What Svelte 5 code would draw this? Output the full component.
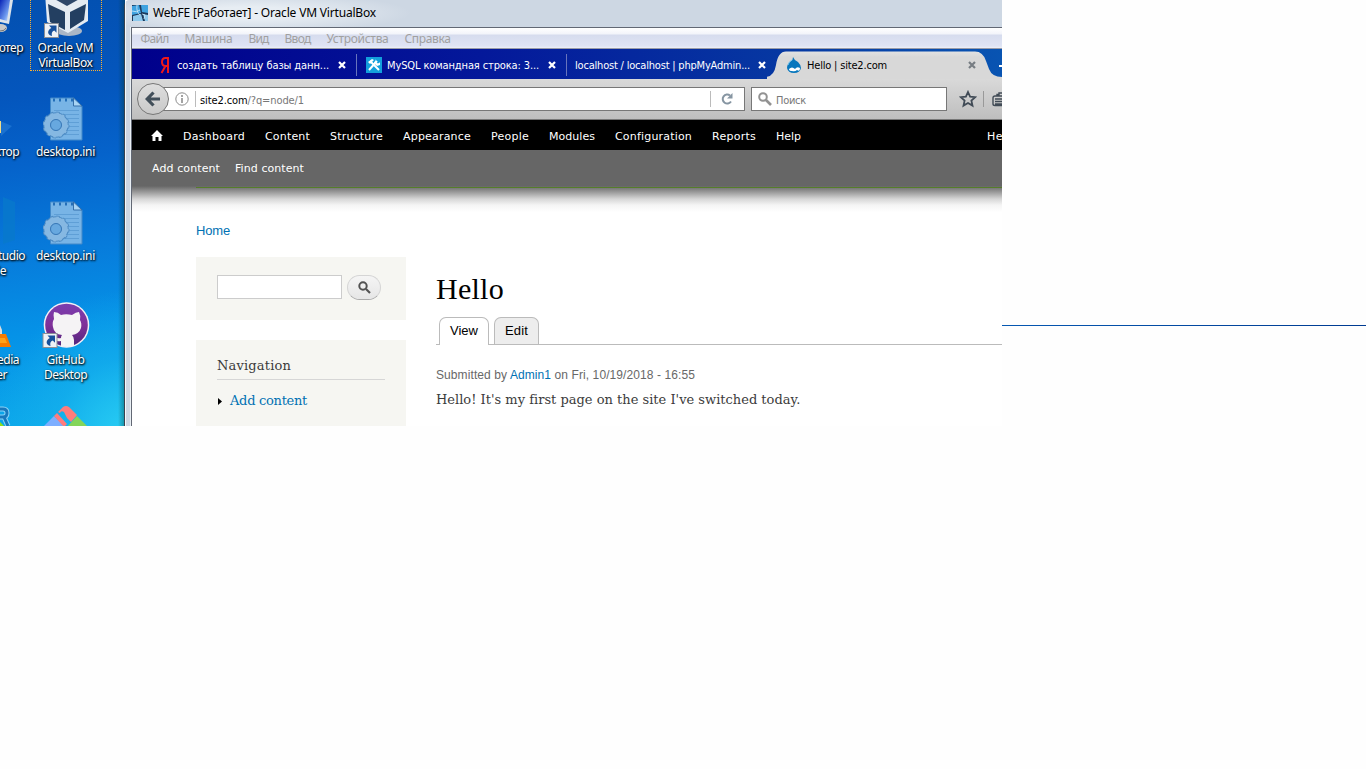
<script>
  // Spreads a label's letters so that it takes the given width.
  function fit(node, width) {
    const natural = node.getBoundingClientRect().width;
    node.style.letterSpacing = (width - natural) / node.textContent.length + 'px';
  }

  const menus = [
    ['Файл', 28], ['Машина', 48], ['Вид', 20], ['Ввод', 26], ['Устройства', 62], ['Справка', 46]
  ];
  const adminLinks = [
    ['Dashboard', 62], ['Content', 45], ['Structure', 53], ['Appearance', 68], ['People', 38],
    ['Modules', 46], ['Configuration', 77], ['Reports', 44], ['Help', 25]
  ];
</script>

{#snippet cross(color)}
  <svg class="cross" width="8" height="8" viewBox="0 0 8 8"><path d="M1 1l6 6M7 1L1 7" stroke={color} stroke-width="2.2" /></svg>
{/snippet}

{#snippet arrow()}
  <rect x="0.5" y="0.5" width="14" height="14" fill="#eef1f5" stroke="#8b8f96" />
  <path d="M5 2.500h7.500v7.300L10.300 7.500C8 8.300 7.300 10 8 13C3.500 12 2.600 7.500 7.300 4.900z" fill="#17509b" />
{/snippet}

{#snippet iniFile()}
  <svg class="ini" width="42" height="44" viewBox="0 0 42 44">
    <path d="M7.500 1h23l8.500 8v34H7.500z" fill="#78b4e6" stroke="#4289c9" />
    <path d="M30.500 1v8H39z" fill="#a8d4f4" stroke="#356fa9" />
    <path d="M11 13.500h25M11 17.500h25M11 21.500h25M11 25.500h25M11 29.500h25M11 33.500h25M11 37.500h25" stroke="#5f9fd6" />
    <path d="M10 3h20" stroke="#246fb8" stroke-width="3" stroke-dasharray="2 4" />
    <circle cx="13" cy="28" r="9" fill="none" stroke="#4d8bc4" stroke-width="7.500" />
    <circle cx="13" cy="28" r="12" fill="none" stroke="#4d8bc4" stroke-width="3" stroke-dasharray="3.200 3.080" />
    <circle cx="13" cy="28" r="8.700" fill="none" stroke="#86b8e2" stroke-width="6" />
    <circle cx="13" cy="28" r="11.300" fill="none" stroke="#86b8e2" stroke-width="2.500" stroke-dasharray="2.500 3.420" />
    <circle cx="13" cy="28" r="5.500" fill="#67a8df" stroke="#3979b8" />
  </svg>
{/snippet}

<div class="screen">
  <div class="desktop">
    <svg class="piece" style:left="0px" style:top="0px" width="14" height="34" viewBox="0 0 14 34">
      <defs><linearGradient id="mon" x2="1" y2="1"><stop stop-color="#0924b7" /><stop offset=".65" stop-color="#6d99ef" /><stop offset="1" stop-color="#e1efff" /></linearGradient></defs>
      <path d="M0 0h13L9 24L0 22z" fill="#dce3ea" /><path d="M0 0h10L7 21L0 19z" fill="url(#mon)" />
      <ellipse cx="1" cy="28" rx="6" ry="4" fill="#c8c9c9" /><path d="M0 31q5 0 6-3" stroke="#777" fill="none" />
    </svg>
    <svg class="piece" style:left="0px" style:top="118px" width="14" height="20" viewBox="0 0 14 20"><path d="M0 3l12 5L1 18z" fill="#3c91e1" opacity=".4" /><path d="M0 3h1v12H0z" fill="#efdc88" /></svg>
    <svg class="piece" style:left="0px" style:top="196px" width="16" height="50" viewBox="0 0 16 50"><path d="M3 1l12 5v38L3 48z" fill="#087acb" opacity=".75" /></svg>
    <svg class="piece" style:left="0px" style:top="324px" width="12" height="25" viewBox="0 0 12 25"><path d="M0 1l2 5v5H0z" fill="#ddd" /><path d="M0 10h6l5 13H0z" fill="#f77b00" /><path d="M0 14h5l2 5H0z" fill="#ffa21a" /></svg>
    <svg class="piece" style:left="0px" style:top="405px" width="12" height="21" viewBox="0 0 12 21"><path d="M0 4h3q4 0 4 4t-4 4H0M4 12l4 9" fill="none" stroke="#8bd3f7" stroke-width="5" /><path d="M0 4h3q4 0 4 4t-4 4H0M4 12l4 9" fill="none" stroke="#1878bd" stroke-width="3" /><path d="M0 17l4 4H0z" fill="#91df1b" /></svg>

    <div class="cut" style:top="40px" style:left="-34px" style:width="57px"><span>Компьютер</span></div>
    <div class="cut" style:top="144px" style:left="-34px" style:width="53px"><span>Редактор</span></div>
    <div class="cut" style:top="248px" style:left="-34px" style:width="59px"><span>Visual Studio</span></div>
    <div class="cut" style:top="263px" style:left="-34px" style:width="40px"><span>Code</span></div>
    <div class="cut" style:top="352px" style:left="-34px" style:width="53px"><span>VLC media</span></div>
    <div class="cut" style:top="367px" style:left="-34px" style:width="41px"><span>player</span></div>

    <div class="icon selected" style:top="-8px">
      <svg width="50" height="46" viewBox="0 0 50 46">
        <ellipse cx="28" cy="38" rx="13" ry="5" fill="#aab6c6" />
        <path d="M4 0L26 6L47 0v28L27 40L6 29z" fill="#e4ebf2" />
        <path d="M7 11l17 8v18L9 29zM29 19l16-8l-2 16l-14 9z" fill="#233f61" />
        <path d="M10 4l16 9L42 4z" fill="#2d4769" />
        <g transform="translate(3 30)">{@render arrow()}</g>
      </svg>
      <div class="label"><span use:fit={56}>Oracle VM</span><span use:fit={54}>VirtualBox</span></div>
    </div>
    <div class="icon" style:top="97px">{@render iniFile()}<div class="label"><span use:fit={59}>desktop.ini</span></div></div>
    <div class="icon" style:top="201px">{@render iniFile()}<div class="label"><span use:fit={59}>desktop.ini</span></div></div>
    <div class="icon" style:top="302px">
      <svg width="48" height="47" viewBox="0 0 48 47">
        <defs><linearGradient id="gh" x2="0" y2="1"><stop stop-color="#7a3daf" /><stop offset=".5" stop-color="#803099" /><stop offset="1" stop-color="#50257c" /></linearGradient></defs>
        <circle cx="24.500" cy="23" r="22.800" fill="#f3eff6" /><circle cx="24.500" cy="23" r="21.300" fill="url(#gh)" />
        <path d="M12 10q4 0 7 3q5-1.500 11 0q4-3 7-3q2 4 1 8q2 3 1 8q-2 6-9 7q2 2 2 5v6q-7 2-13 0v-5q-6 1-8-3l-3-4q4 0 6 3q2 2 5 1q0-2 1-3q-8-1-9-8q-1-5 1-8q-1-4 0-7z" fill="#f5f3f5" />
        <g transform="translate(0.500 31)">{@render arrow()}</g>
      </svg>
      <div class="label tight"><span use:fit={38}>GitHub</span><span use:fit={43}>Desktop</span></div>
    </div>
    <div class="icon" style:top="405px">
      <svg width="46" height="21" viewBox="0 0 46 21">
        <path d="M0 22L11 11L22 22z" fill="#7daeff" /><path d="M24 22l10-11l11 11z" fill="#84d559" />
        <path d="M15 7l5-5q3-2 6 0l8 8l-6 7l-4-4l-3-6q-3-2-4 1z" fill="#ff7c7c" /><path d="M11 11l3-3l10 11l-3 3z" fill="#ff7c7c" />
      </svg>
    </div>
  </div>

  <div class="window">
    <header class="title">
      <svg width="16" height="16" viewBox="0 0 16 16"><rect width="16" height="16" fill="#1d3a5c" /><path d="M0 1l7-1l2 8l-9 2zM9 0h7v8l-6-1z" fill="#3fa3e0" /><path d="M1 11l8-2l2 7H1zM11 9l5 1v6h-3z" fill="#8dc9ec" /><path d="M0 6q5 2 8-1M5 0q-1 7 3 10M10 9l3 1l-1 4" fill="none" stroke="#d2ecfa" stroke-width=".8" /></svg>
      <span use:fit={223}>WebFE [Работает] - Oracle VM VirtualBox</span>
    </header>

    <div class="client">
      <nav class="menu">
        {#each menus as [name, w]}<span use:fit={w}>{name}</span>{/each}
      </nav>

      <div class="tabs">
        <div class="tab first">
          <svg width="10" height="18" viewBox="0 0 10 18"><path d="M8 1v16M8 2H5.500Q2 2 2 6t3.500 4H8M5.500 10L1.500 17" fill="none" stroke="#f01818" stroke-width="2" /></svg>
          <span use:fit={152}>создать таблицу базы данн...</span>{@render cross('#fff')}
        </div>
        <div class="tab second">
          <svg width="16" height="16" viewBox="0 0 16 16"><rect width="16" height="16" fill="#139fdc" /><path d="M3 13l8-9M4 4l9 9" stroke="#fff" stroke-width="2" /><path d="M2 5l4-3l2 1l-4 4zM10 2q-1 3 1 4q2 1 3-1v3l-3 1l-3-3z" fill="#fff" /></svg>
          <span use:fit={152}>MySQL командная строка: 3...</span>{@render cross('#fff')}
        </div>
        <div class="tab third"><span use:fit={175}>localhost / localhost | phpMyAdmin...</span>{@render cross('#fff')}</div>
        <div class="tab active">
          <svg class="shape" width="235" height="30" viewBox="0 0 235 30"><defs><linearGradient id="tab" x2="0" y2="1"><stop stop-color="#e2e2e2" /><stop offset=".2" stop-color="#d8d8d8" /></linearGradient></defs><path d="M-2 28Q7 28 9 16Q11 2.500 19 2.500H208Q216 2.500 219 12L222 20Q225 28 235 28V30H-2z" fill="url(#tab)" /></svg>
          <svg width="16" height="18" viewBox="0 0 16 18"><path d="M7 1q1 3 5 5q3 3 3 6q-1 5-7 5t-7-5q0-4 4-7q2-1 2-4z" fill="#0877bd" /><path d="M3 13q3-3 6 0q2-3 5-1q0 4-3 2q-2 2-5 1q-3 0-3-2z" fill="#fff" /><path d="M6 4q-3 1-4 5" stroke="#7bc4eb" fill="none" /></svg>
          <span use:fit={80}>Hello | site2.com</span>{@render cross('#777d83')}
        </div>
        <div class="plus"></div>
      </div>

      <div class="navbar">
        <div class="back"><svg width="16" height="16" viewBox="0 0 16 16"><path d="M15 8H3M8.500 1.500L2.200 8l6.300 6.500" fill="none" stroke="#424f5a" stroke-width="3.200" /></svg></div>
        <div class="url">
          <svg width="14" height="14" viewBox="0 0 14 14"><circle cx="7" cy="7" r="6.200" fill="none" stroke="#8b8b8b" /><path d="M7 6v5M7 3v2" stroke="#858585" stroke-width="1.500" /></svg>
          <i></i><span use:fit={104}><b>site2.com</b>/?q=node/1</span><i class="end"></i>
          <svg width="12" height="12" viewBox="0 0 12 12"><path d="M10 8.500A4.500 4.500 0 1 1 9 2.500" fill="none" stroke="#8695a2" stroke-width="2" /><path d="M11.500 0v5.500H6z" fill="#8695a2" /></svg>
        </div>
        <div class="find">
          <svg width="14" height="14" viewBox="0 0 14 14"><circle cx="5" cy="5" r="3.800" fill="none" stroke="#929292" stroke-width="2" /><path d="M8 8l5 5" stroke="#929292" stroke-width="2.600" /></svg>
          <span use:fit={30}>Поиск</span>
        </div>
        <svg class="star" width="18" height="18" viewBox="0 0 18 18"><path d="M9 2l2.100 4.700l5.100.5l-3.800 3.400l1.100 5L9 13l-4.500 2.600l1.100-5L1.800 7.200l5.100-.5z" fill="none" stroke="#414b56" stroke-width="1.800" /></svg>
        <i></i>
        <svg class="list" width="11" height="15" viewBox="0 0 11 15"><path d="M11 4H3Q1 4 1 6v6q0 1.500 2 1.500h8M5 4V2.500h2V1h4M3 7h8M3 9.500h8M3 12h8" fill="none" stroke="#414b56" stroke-width="1.400" /></svg>
      </div>

      <div class="admin">
        <svg width="12" height="11" viewBox="0 0 12 11"><path d="M6 0l6 6h-1.500v5h-3V7h-3v4h-3V6H0z" fill="#fff" /></svg>
        {#each adminLinks as [name, w]}<span use:fit={w}>{name}</span>{/each}
        <span class="hello" use:fit={30}>Hello</span>
      </div>
      <div class="shortcuts"><span use:fit={68}>Add content</span><span use:fit={69}>Find content</span></div>
      <div class="shade"></div>

      <div class="page">
        <div class="crumb"><span use:fit={34}>Home</span></div>
        <div class="columns">
          <aside>
            <div class="block search">
              <div class="field"></div>
              <div class="go"><svg width="13" height="13" viewBox="0 0 13 13"><circle cx="5" cy="5" r="3.700" fill="none" stroke="#525252" stroke-width="2" /><path d="M8 8l4 4" stroke="#525252" stroke-width="2.200" /></svg></div>
            </div>
            <div class="block links">
              <h2><span use:fit={74}>Navigation</span></h2>
              <div class="item"><svg width="4" height="7" viewBox="0 0 4 7"><path d="M0 0l4 3.500L0 7z" /></svg><span use:fit={77}>Add content</span></div>
            </div>
          </aside>
          <main>
            <h1><span use:fit={68}>Hello</span></h1>
            <div class="local"><div class="view"><span use:fit={28}>View</span></div><div class="edit"><span use:fit={23}>Edit</span></div></div>
            <p class="meta"><span use:fit={259}>Submitted by <em>Admin1</em> on Fri, 10/19/2018 - 16:55</span></p>
            <p class="body"><span use:fit={364}>Hello! It's my first page on the site I've switched today.</span></p>
          </main>
        </div>
      </div>
    </div>
  </div>
  <div class="rule"></div>
</div>

<style>
  :global(body) { background: #fefefe; overflow: hidden; }
  .screen { position: relative; width: 1366px; height: 769px; overflow: hidden; background: #fefefe; }
  span { white-space: pre; display: inline-block; }
  svg { flex: none; display: block; }
  .desktop { position: absolute; left: 0; top: 0; width: 125px; height: 426px; overflow: hidden;
    background: radial-gradient(ellipse 140px 150px at 130px 440px, #2bd0f4, #18b5ee88 55%, transparent), linear-gradient(172deg, #0350b0 0, #0456bd 22%, #0563cb 38%, #077bdb 58%, #0592e7 76%, #0caaea 100%);
    font: 12px/15px "Noto Sans", sans-serif; color: #fff; text-shadow: 1px 1px 2px #000, 0 1px 2px #000a; }
  .desktop::after { content: ''; position: absolute; right: 0; top: 0; width: 7px; height: 100%; background: linear-gradient(90deg, transparent, #0326); }
  .piece { position: absolute; }
  .cut { position: absolute; display: flex; justify-content: flex-end; letter-spacing: -.5px; }
  .icon { position: absolute; left: 31px; width: 70px; display: flex; flex-direction: column; align-items: center; }
  .ini { margin-right: 4px; }
  .label { display: flex; flex-direction: column; align-items: center; margin: 3px 1px 0 0; }
  .selected { left: 30px; width: 70px; height: 77px; border: 1px dotted #ffb030; }
  .selected .label { margin-top: 1px; }

  .window { position: absolute; left: 124px; top: 0; width: 878px; height: 426px; overflow: hidden; display: flex; flex-direction: column;
    background: linear-gradient(90deg, #39434f 0 1px, #f4f8fb 1px 2px, #cdd7e3 2px 6px, #e9eff4 6px 7px, #59606c 7px 8px, #ccd6e2 8px); border-top-left-radius: 6px; box-sizing: border-box; }
  .title { height: 27px; flex: none; display: flex; align-items: center; padding: 0 0 1px 6px; gap: 5px; margin-left: 2px; box-sizing: border-box;
    background: radial-gradient(ellipse 160px 20px at 125px 13px, #e7edf3 30%, #cdd7e300), #cdd7e3; font: 12px "Noto Sans", sans-serif; color: #000; }
  .title span { padding-bottom: 1px; }
  .client { flex: 1; margin-left: 7px; border: solid #626874; border-width: 1px 0 0 1px; background: #fff; display: flex; flex-direction: column; min-height: 0; }
  .menu { height: 21px; flex: none; display: flex; align-items: center; gap: 16px; padding-left: 8.500px; font: 12px "Noto Sans", sans-serif; color: #a0a0a0;
    background: linear-gradient(#fff 0, #f2f4fa 6px, #d6dcee 7px, #dfe4f4 18px, #eef0f8 20px, #999ca8 20px); box-sizing: border-box; }
  .tabs { height: 30px; flex: none; display: flex; background: linear-gradient(90deg, #00008b, #04189a 40%, #0638a2 75%, #0854b2); font: 11px "DejaVu Sans Condensed", "DejaVu Sans", sans-serif; font-stretch: condensed; color: #fff; }
  .tab { display: flex; align-items: center; box-sizing: border-box; flex: none; padding-top: 2px; position: relative; }
  .tab.first { width: 225px; padding-left: 28px; gap: 7px; }
  .tab.second { width: 210px; padding-left: 9px; gap: 5px; }
  .tab.third { width: 210px; padding-left: 8px; }
  .tab.first::after, .tab.second::after { content: ''; width: 1px; height: 22px; background: #6874bd; margin-left: auto; flex: none; }
  .first .cross { margin-left: 2px; }
  .second .cross { margin-left: 4px; }
  .third .cross { margin-left: 8px; }
  .active { width: 212px; padding-left: 9px; gap: 5px; color: #000; }
  .active > svg, .active > span { position: relative; }
  .active .shape { position: absolute; left: -10px; top: 0; }
  .active .cross { margin-left: 76px; }
  .plus { width: 3px; height: 2px; background: #fff; margin: 16px 0 0 auto; position: relative; }
  .navbar { height: 41px; flex: none; display: flex; align-items: center; background: linear-gradient(#d9d9d9, #bebebe); border-bottom: 1px solid #777; box-sizing: border-box; padding-left: 5px; font: 11px "DejaVu Sans Condensed", sans-serif; color: #777; font-stretch: condensed; }
  .back { width: 32px; height: 32px; box-sizing: border-box; border: 1px solid #777; border-radius: 50%; background: linear-gradient(#dedede, #c9c9c9); display: grid; place-items: center; z-index: 1; flex: none; }
  .url { width: 592px; height: 24px; margin-left: -16px; background: #fff; border: 1px solid #777; box-sizing: border-box; display: flex; align-items: center; padding-left: 21px; flex: none; }
  .url b { font-weight: normal; color: #000; }
  i { width: 1px; height: 16px; background: #bbb; margin: 0 4px 0 6px; flex: none; }
  i.end { margin: 0 10px 0 auto; }
  .url svg:last-child { margin-right: 11px; }
  .find { width: 196px; height: 24px; margin-left: 6px; border: 1px solid #777; background: #fff; box-sizing: border-box; display: flex; align-items: center; gap: 4px; padding-left: 6px; flex: none; }
  .find span, .url span { padding-top: 2px; }
  .star { margin-left: 12px; }
  .navbar > i { background: #999; margin: 0 8px 0 6px; }
  .list { margin-right: -2px; }
  .admin { height: 30px; flex: none; background: #000; color: #fff; display: flex; align-items: center; gap: 20px; padding-left: 19px; overflow: hidden; font: 11px "DejaVu Sans", sans-serif; }
  .admin span { flex: none; padding-top: 2px; }
  .hello { margin-left: 166px; }
  .shortcuts { height: 36px; flex: none; background: #666; color: #fff; display: flex; gap: 15px; padding-left: 20px; align-items: center; font: 11px "DejaVu Sans", sans-serif; }
  .shade { height: 26px; flex: none; background: linear-gradient(#557d2a, #557d2a) 64px 1px / 100% 1px no-repeat, linear-gradient(#666 0, #777 2px, #a2a2a2 7px, #d6d6d6 13px, #f4f4f4 19px, #fff); }
  .page { padding: 10px 0 0 64px; }
  .crumb { height: 35px; font: 13px/17px "Liberation Sans", sans-serif; color: #0071b3; }
  .columns { display: flex; gap: 30px; }
  aside { width: 210px; flex: none; display: flex; flex-direction: column; gap: 20px; }
  .block { background: #f6f6f2; box-sizing: border-box; }
  .search { height: 63px; display: flex; padding: 18px 0 0 21px; gap: 5px; }
  .field { width: 125px; height: 24px; border: 1px solid #ccc; box-sizing: border-box; background: #fff; }
  .go { width: 34px; height: 25px; border: 1px solid #d5d5d5; border-bottom-color: #aaa; box-sizing: border-box; border-radius: 13px; background: linear-gradient(#f5f5f5, #e6e6e6); display: grid; place-items: center; }
  .links { height: 110px; padding: 16px 21px; color: #3b3b3b; font: 13px "DejaVu Serif", serif; }
  h2 { margin: 0; height: 24px; box-sizing: border-box; border-bottom: 1px solid #d6d6d6; font: inherit; line-height: 20px; }
  .item { display: flex; align-items: center; gap: 8px; padding-left: 1px; margin-top: 12px; color: #0071b3; line-height: 20px; }
  .item span { margin-top: -1px; }
  main { flex: 1; }
  h1 { margin: 0; height: 60px; padding-top: 12px; box-sizing: border-box; font: 30px/40px "Liberation Serif", serif; color: #000; }
  .local { height: 28px; border-bottom: 1px solid #bbb; box-sizing: border-box; display: flex; gap: 5px; padding-left: 3px; font: 13px/26px "Liberation Sans", sans-serif; color: #000; }
  .local div { border: 1px solid #bbb; border-bottom: 0; border-radius: 7px 7px 0 0; height: 28px; box-sizing: border-box; text-align: center; }
  .view { width: 50px; background: #fff; }
  .local .edit { width: 45px; height: 27px; background: #ededed; }
  p { margin: 0; }
  .meta { margin-top: 22px; font: 12px/17px "Liberation Sans", sans-serif; color: #686868; }
  em { font-style: normal; color: #0071b3; }
  .body { margin-top: 6px; font: 13px/20px "DejaVu Serif", serif; color: #3b3b3b; }
  .rule { position: absolute; left: 1002px; top: 325px; width: 364px; height: 1px; background: linear-gradient(90deg, #0658b2, #003b91); }
</style>
